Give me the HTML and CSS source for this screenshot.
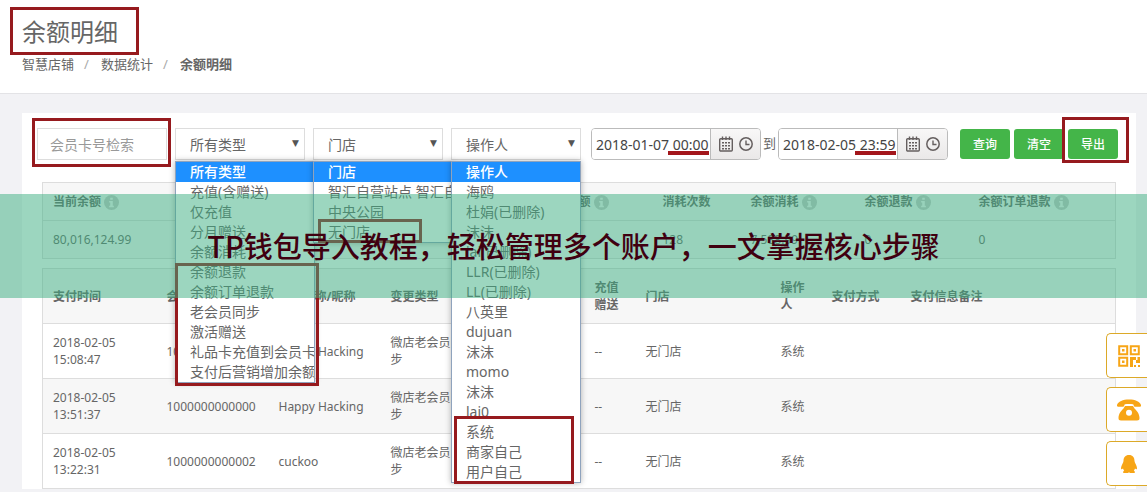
FILE: index.html
```html
<!DOCTYPE html>
<html lang="zh-CN">
<head>
<meta charset="utf-8">
<title>余额明细</title>
<link rel="stylesheet" href="styles.css">
</head>
<body>
<svg class="defs" aria-hidden="true">
  <symbol id="calendar" viewBox="0 0 14 16"><path d="M1.700 2.700h10.600a1 1 0 0 1 1 1v10.300a1 1 0 0 1-1 1H1.700a1 1 0 0 1-1-1V3.700a1 1 0 0 1 1-1z" fill="none" stroke="currentColor" stroke-width="1.400"/><path d="M3.500.5v3.500M7 .5v3.500M10.500.5v3.500" stroke="currentColor" stroke-width="1.400"/><path d="M3 6h2v1.500H3zM6 6h2v1.500H6zM9 6h2v1.500H9zM3 9h2v1.500H3zM6 9h2v1.500H6zM9 9h2v1.500H9zM3 12h2v1.500H3zM6 12h2v1.500H6zM9 12h2v1.500H9z" fill="currentColor"/></symbol>
  <symbol id="clock" viewBox="0 0 14 14"><circle cx="7" cy="7" r="6.200" fill="none" stroke="currentColor" stroke-width="1.500"/><path d="M7 3.500V7.500H10.500" fill="none" stroke="currentColor" stroke-width="1.400"/></symbol>
  <symbol id="info" viewBox="0 0 14 14"><circle cx="7" cy="7" r="7" fill="currentColor"/><path d="M5.800 2.500h2.400v2H5.800zM4.800 5.500h3.400v4.500h1v1.500H4.800V10h1V7h-1z" fill="#f7f7f7"/></symbol>
</svg>

<header class="page-head">
  <h1 class="title">余额明细<span class="mark mark-title"></span></h1>
  <nav class="crumbs">
    <a href="#">智慧店铺</a><span class="slash">/</span><a href="#">数据统计</a><span class="slash">/</span><strong>余额明细</strong>
  </nav>
</header>

<main class="panel">
  <form class="filters">
    <div class="field">
      <input class="control" type="text" placeholder="会员卡号检索" aria-label="会员卡号检索">
      <span class="mark mark-card"></span>
    </div>
    <div class="field">
      <select class="control" aria-label="所有类型"><option>所有类型</option></select>
      <span class="arrow">▼</span>
      <ul class="menu menu-wide" role="listbox" aria-label="类型">
        <li class="chosen" role="option" aria-selected="true">所有类型</li>
        <li role="option">充值(含赠送)</li>
        <li role="option">仅充值</li>
        <li role="option">分月赠送</li>
        <li role="option">余额消耗</li>
        <li role="option">余额退款</li>
        <li role="option">余额订单退款</li>
        <li role="option">老会员同步</li>
        <li role="option">激活赠送</li>
        <li role="option">礼品卡充值到会员卡</li>
        <li role="option">支付后营销增加余额</li>
      </ul>
      <span class="mark mark-types"></span>
    </div>
    <div class="field">
      <select class="control" aria-label="门店"><option>门店</option></select>
      <span class="arrow">▼</span>
      <ul class="menu menu-wide" role="listbox" aria-label="门店">
        <li class="chosen" role="option" aria-selected="true">门店</li>
        <li role="option">智汇自营站点 智汇自营</li>
        <li role="option">中央公园</li>
        <li role="option">无门店</li>
      </ul>
      <span class="mark mark-store"></span>
    </div>
    <div class="field">
      <select class="control" aria-label="操作人"><option>操作人</option></select>
      <span class="arrow">▼</span>
      <ul class="menu" role="listbox" aria-label="操作人">
        <li class="chosen" role="option" aria-selected="true">操作人</li>
        <li role="option">海鸥</li>
        <li role="option">杜娟(已删除)</li>
        <li role="option">沫沫</li>
        <li role="option">lai(已删除)</li>
        <li role="option">LLR(已删除)</li>
        <li role="option">LL(已删除)</li>
        <li role="option">八英里</li>
        <li role="option">dujuan</li>
        <li role="option">沫沫</li>
        <li role="option">momo</li>
        <li role="option">沫沫</li>
        <li role="option">lai0</li>
        <li role="option">系统</li>
        <li role="option">商家自己</li>
        <li role="option">用户自己</li>
      </ul>
      <span class="mark mark-users"></span>
    </div>
    <div class="range">
      <div class="date">
        <input type="text" value="2018-01-07 00:00" aria-label="开始时间">
        <button type="button" aria-label="选择开始时间"><svg class="i-cal"><use href="#calendar"/></svg><svg class="i-clock"><use href="#clock"/></svg></button>
        <span class="underline"></span>
      </div>
      <span class="to">到</span>
      <div class="date">
        <input type="text" value="2018-02-05 23:59" aria-label="结束时间">
        <button type="button" aria-label="选择结束时间"><svg class="i-cal"><use href="#calendar"/></svg><svg class="i-clock"><use href="#clock"/></svg></button>
        <span class="underline"></span>
      </div>
    </div>
    <div class="actions">
      <button class="btn" type="button">查询</button>
      <button class="btn" type="button">清空</button>
      <button class="btn" type="button">导出<span class="mark mark-export"></span></button>
    </div>
  </form>

  <table class="grid summary">
    <colgroup><col class="w-now"><col class="w-times"><col class="w-total"><col class="w-count"><col class="w-money"><col class="w-money"><col></colgroup>
    <thead>
      <tr><th>当前余额 <svg class="i-info"><use href="#info"/></svg></th><th></th><th>充值金额 <svg class="i-info"><use href="#info"/></svg></th><th>消耗次数</th><th>余额消耗 <svg class="i-info"><use href="#info"/></svg></th><th>余额退款 <svg class="i-info"><use href="#info"/></svg></th><th>余额订单退款 <svg class="i-info"><use href="#info"/></svg></th></tr>
    </thead>
    <tbody>
      <tr><td>80,016,124.99</td><td></td><td></td><td>128</td><td>7,588.99</td><td>0</td><td>0</td></tr>
    </tbody>
  </table>

  <table class="grid detail">
    <colgroup><col class="w-time"><col class="w-no"><col class="w-no"><col class="w-type"><col class="w-amount"><col class="w-short"><col class="w-store"><col class="w-short"><col class="w-pay"><col></colgroup>
    <thead>
      <tr><th>支付时间</th><th>会员卡号</th><th>会员名称/昵称</th><th>变更类型</th><th></th><th>充值赠送</th><th>门店</th><th>操作人</th><th>支付方式</th><th>支付信息备注</th></tr>
    </thead>
    <tbody>
      <tr><td>2018-02-05 15:08:47</td><td>1000000000000</td><td>Happy Hacking</td><td>微店老会员同步</td><td></td><td>--</td><td>无门店</td><td>系统</td><td></td><td></td></tr>
      <tr><td>2018-02-05 13:51:37</td><td>1000000000000</td><td>Happy Hacking</td><td>微店老会员同步</td><td></td><td>--</td><td>无门店</td><td>系统</td><td></td><td></td></tr>
      <tr><td>2018-02-05 13:22:31</td><td>1000000000002</td><td>cuckoo</td><td>微店老会员同步</td><td></td><td>--</td><td>无门店</td><td>系统</td><td></td><td></td></tr>
    </tbody>
  </table>
</main>

<aside class="dock">
  <button type="button" aria-label="二维码"><svg class="i-dock" viewBox="0 0 22 22"><path d="M1.200 1.200h8v8h-8zM12.800 1.200h8v8h-8zM1.200 12.800h8v8h-8z" fill="none" stroke="currentColor" stroke-width="2"/><path d="M4 4h2.500v2.500H4zM15.500 4H18v2.500h-2.500zM4 15.500h2.500V18H4zM12 12h6v3h1.500v-3H22v6h-4v-3h-3v7h-3zM16 20h2v2h-2zM20 20h2v2h-2z" fill="currentColor"/></svg></button>
  <button type="button" aria-label="电话"><svg class="i-dock i-phone" viewBox="0 0 24 22"><path d="M0 6C1 2.500 6 .5 12 .5S23 2.500 24 6c.3 1.500-.5 1.800-1.500 1.800h-4.500c-1.500 0-1-2-2-2.500-2-.5-6-.5-8 0-1 .5-.5 2.500-2 2.500H1.500C.5 7.800-.3 7.500 0 6z" fill="currentColor"/><path d="M8 7h8l1.500 2.500c2 2 5 5 5 9.500 0 1.800-.8 2.500-2.500 2.500H4c-1.700 0-2.500-.7-2.500-2.500 0-4.500 3-7.500 5-9.500zM12 10.700a3 3 0 1 0 0 6 3 3 0 0 0 0-6z" fill="currentColor" fill-rule="evenodd"/></svg></button>
  <button type="button" aria-label="QQ"><svg class="i-qq" viewBox="0 0 16 18"><path d="M8 0c3.700 0 5.500 2.500 5.500 6 0 1.500 2.500 5 2.500 7 0 1-.3 1.500-.8 1.300L14 13.500c-.3 1-.7 1.500-1.200 2 1 .5 1.200 1.200.9 2.500H9L8 17.200 7 18H2.300c-.3-1.300-.1-2 .9-2.500-.5-.5-.9-1-1.200-2l-1.200.8C.3 14.500 0 14 0 13c0-2 2.500-5.500 2.500-7C2.500 2.500 4.300 0 8 0z" fill="currentColor"/></svg></button>
</aside>

<div class="banner">TP钱包导入教程，轻松管理多个账户，一文掌握核心步骤</div>
</body>
</html>
```

FILE: styles.css
```css
* { box-sizing: border-box; }

body {
  margin: 0;
  min-height: 100vh;
  overflow: hidden;
  position: relative;
  background: #f2f2f5;
  color: #666;
  font: 12px/17px "Noto Sans", "Noto Sans CJK SC", sans-serif;
}

input, select, button { font-family: inherit; margin: 0; }
a { color: inherit; text-decoration: none; }
.defs { display: none; }

.page-head {
  background: #fff;
  border-bottom: 1px solid #e3e3e6;
  padding: 16px 22px 19px;
}
.title {
  position: relative;
  width: max-content;
  margin: 0;
  font-size: 24px;
  font-weight: 400;
  line-height: 32px;
}
.crumbs {
  display: flex;
  padding-top: 6px;
  font-size: 13px;
  line-height: 20px;
}
.slash { width: 27px; padding-left: 10px; color: #aaa; }

.panel {
  margin: 19px 11px 0 22px;
  padding-top: 15px;
  background: #fff;
}
.filters {
  display: flex;
  gap: 8px;
  padding: 0 18px 0 15px;
}
.field { position: relative; width: 130px; }
.control {
  display: block;
  width: 100%;
  height: 32px;
  padding: 0 12px;
  border: 1px solid #ddd;
  border-radius: 0;
  background: #fff;
  color: #666;
  font-size: 14px;
  appearance: none;
}
select.control { padding-left: 14px; }
.control::placeholder { color: #999; }
.arrow {
  position: absolute;
  right: 6px;
  top: 7px;
  font: 9px/17px "DejaVu Sans", sans-serif;
  color: #555;
  pointer-events: none;
}

.menu {
  position: absolute;
  z-index: 1;
  top: 33px;
  left: 0;
  width: 130px;
  margin: 0;
  padding: 0;
  overflow: hidden;
  list-style: none;
  background: #fff;
  border: 1px solid #8fa3bd;
  box-shadow: 0 0 6px rgba(0, 0, 0, .3);
  font-size: 14px;
  line-height: 20px;
  white-space: nowrap;
}
.menu-wide { width: 140px; }
.menu li { height: 20px; padding-left: 14px; }
.menu .chosen { background: #1e90ff; color: #fff; font-weight: 500; }

.range { display: flex; gap: 2px; margin-left: 2px; }
.to { width: 13px; line-height: 30px; font-size: 13px; }
.date {
  position: relative;
  display: flex;
  width: 170px;
  height: 32px;
  border: 1px solid #bbb;
  border-radius: 4px;
  overflow: hidden;
}
.date input {
  flex: 1;
  min-width: 0;
  padding: 0 0 0 4px;
  border: 0;
  color: #444;
  font-size: 14px;
}
.date button {
  display: flex;
  align-items: center;
  justify-content: center;
  gap: 6px;
  width: 50px;
  padding: 0;
  border: 0;
  border-left: 1px solid #bbb;
  background: linear-gradient(#f8f7f7, #eae8e8);
  color: #655f5f;
}
.i-cal { width: 14px; height: 16px; }
.i-clock { width: 14px; height: 14px; }
.underline {
  position: absolute;
  left: 76px;
  bottom: 4px;
  width: 41px;
  height: 4px;
  background: #a3161b;
}

.actions {
  display: flex;
  align-items: center;
  gap: 4px;
  margin-left: auto;
}
.btn {
  position: relative;
  width: 50px;
  height: 30px;
  padding: 0;
  border: 0;
  border-radius: 3px;
  background: #44b549;
  color: #fff;
  font-size: 12px;
  font-weight: 500;
}

.mark {
  position: absolute;
  z-index: 2;
  border: 3px solid #961a1e;
  pointer-events: none;
}
.mark-title { left: -12px; top: -9px; width: 129px; height: 48px; }
.mark-card { left: -5px; top: -10px; width: 139px; height: 49px; }
.mark-types { left: 0; top: 135px; width: 144px; height: 123px; }
.mark-store { left: 5px; top: 91px; width: 104px; height: 24px; }
.mark-users { left: 3px; top: 288px; width: 120px; height: 68px; }
.mark-export { left: -6px; top: -12px; width: 67px; height: 46px; }

.grid {
  width: calc(100% - 40px);
  margin: 0 20px;
  border-collapse: collapse;
  border: 1px solid #ddd;
  table-layout: fixed;
}
.grid th, .grid td {
  padding: 0 10px;
  border-bottom: 1px solid #ddd;
  text-align: left;
  vertical-align: middle;
}
.grid th { background: #f7f7f7; font-weight: 700; }
.summary { margin-top: 22px; }
.summary tr { height: 38px; }
.summary td { background: #f7f7f7; }
.detail { margin-top: 9px; }
.detail tr { height: 55px; }
.detail tbody tr:nth-child(even) { background: #f7f7f7; }
.i-info { width: 15px; height: 15px; color: #c8c8c8; vertical-align: -4px; }

.w-now { width: 388px; }
.w-times { width: 102px; }
.w-total { width: 120px; }
.w-count { width: 88px; }
.w-money { width: 114px; }
.w-time { width: 114px; }
.w-no { width: 112px; }
.w-type { width: 94px; }
.w-amount { width: 110px; }
.w-short { width: 51px; }
.w-store { width: 135px; }
.w-pay { width: 79px; }

.dock {
  position: absolute;
  z-index: 4;
  top: 333px;
  right: 0;
  display: grid;
  gap: 9px;
}
.dock button {
  display: flex;
  align-items: center;
  justify-content: center;
  width: 41px;
  height: 45px;
  padding: 0 0 0 3px;
  border: 1px solid #dca928;
  border-right: 0;
  border-radius: 5px 0 0 5px;
  background: #fff;
  color: #f7a516;
}
.i-dock { width: 22px; height: 22px; }
.i-phone { width: 24px; }
.i-qq { width: 16px; height: 18px; }

.banner {
  position: absolute;
  z-index: 3;
  top: 194px;
  left: 0;
  right: 0;
  height: 104px;
  background: rgba(57, 173, 127, .5);
  color: #400010;
  font: 500 29px/102px "Noto Sans CJK SC", sans-serif;
  text-align: center;
  white-space: nowrap;
}
```
